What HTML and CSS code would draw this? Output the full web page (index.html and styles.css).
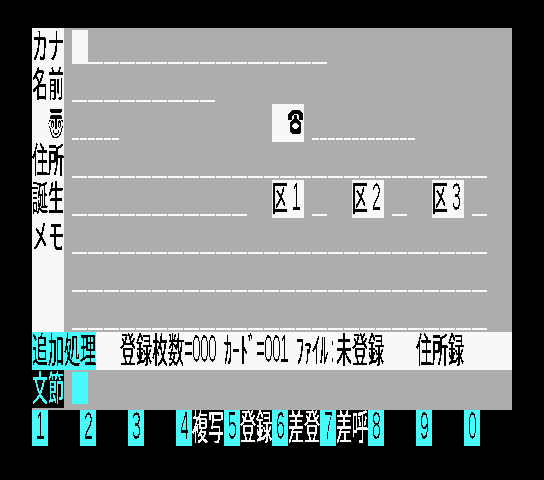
FILE: index.html
```html
<!DOCTYPE html>
<html lang="ja">
<head>
<meta charset="utf-8">
<title>住所録</title>
<link rel="stylesheet" href="styles.css">
</head>
<body>
<svg class="defs" width="0" height="0" aria-hidden="true">
  <filter id="crisp" x="-20%" y="-20%" width="140%" height="140%" color-interpolation-filters="sRGB">
    <feComponentTransfer><feFuncA type="discrete" tableValues="0 1 1"/></feComponentTransfer>
  </filter>
  <filter id="crisp-thin" x="-20%" y="-20%" width="140%" height="140%" color-interpolation-filters="sRGB">
    <feComponentTransfer><feFuncA type="discrete" tableValues="0 0 1"/></feComponentTransfer>
  </filter>
</svg>
<main class="screen">
  <section class="form">
    <div class="labels">
      <div class="row txt"><span class="k">カナ</span></div>
      <div class="row txt"><span class="k">名前</span></div>
      <div class="row txt end"><span class="k mark">〠</span></div>
      <div class="row txt"><span class="k">住所</span></div>
      <div class="row txt"><span class="k">誕生</span></div>
      <div class="row txt"><span class="k">メモ</span></div>
      <div class="row"></div>
      <div class="row"></div>
    </div>
    <div class="fields">
      <div class="row"><span class="cursor white"></span><span class="ul u16 w240"></span></div>
      <div class="row"><span class="ul u16 w144"></span></div>
      <div class="row">
        <span class="ul u8 w48"></span>
        <span class="box far-tel">
          <svg class="phone" width="16" height="24" viewBox="0 0 16 24" shape-rendering="crispEdges">
            <path d="M0 10V4L4 0H11L15 4V10H11V6L9 4H6L4 6V10Z" fill="#000"/>
            <path d="M6 5H9V9H10L13 13V22L11 24H4L2 22V13L5 9H6Z" fill="#000"/>
            <path d="M6 13H9V14H10V15H11V17H10V18H9V19H6V18H5V17H4V15H5V14H6Z" fill="#f8f8f8"/>
          </svg>
        </span>
        <span class="ul u8 w104 gap8"></span>
      </div>
      <div class="row"><span class="ul u16 w416"></span></div>
      <div class="row">
        <span class="ul u16 w176"></span>
        <span class="box far-ku txt"><span class="k">区</span><span class="d wide">1</span></span>
        <span class="ul u16 w16 gap8"></span>
        <span class="box txt next"><span class="k">区</span><span class="d wide">2</span></span>
        <span class="ul u16 w16 gap8"></span>
        <span class="box txt next"><span class="k">区</span><span class="d wide">3</span></span>
        <span class="ul u16 w16 gap8"></span>
      </div>
      <div class="row"><span class="ul u16 w416"></span></div>
      <div class="row"><span class="ul u16 w416"></span></div>
      <div class="row"><span class="ul u16 w416"></span></div>
    </div>
  </section>

  <section class="status">
    <div class="mode txt"><span class="k">追加処理</span></div>
    <div class="info txt">
      <span class="k">登録枚数</span><span class="d one">=</span><span class="d">000</span><span class="sp"></span><span class="k">ｶｰﾄﾞ</span><span class="d one">=</span><span class="d">001</span><span class="sp"></span><span class="k">ﾌｧｲﾙ</span><span class="d one">:</span><span class="k">未登録</span><span class="sp4"></span><span class="k">住所録</span>
    </div>
  </section>

  <section class="input">
    <div class="phrase txt"><span class="k">文節</span></div>
    <div class="entry"><span class="cursor cyan"></span></div>
  </section>

  <section class="keys">
    <div class="key"><span class="num txt"><span class="d">1</span></span></div>
    <div class="key"><span class="num txt"><span class="d">2</span></span></div>
    <div class="key"><span class="num txt"><span class="d">3</span></span></div>
    <div class="key"><span class="num txt"><span class="d">4</span></span><span class="lbl txt"><span class="k">複写</span></span></div>
    <div class="key"><span class="num txt"><span class="d">5</span></span><span class="lbl txt"><span class="k">登録</span></span></div>
    <div class="key"><span class="num txt"><span class="d">6</span></span><span class="lbl txt"><span class="k">差登</span></span></div>
    <div class="key"><span class="num txt"><span class="d">7</span></span><span class="lbl txt"><span class="k">差呼</span></span></div>
    <div class="key"><span class="num txt"><span class="d">8</span></span></div>
    <div class="key"><span class="num txt"><span class="d">9</span></span></div>
    <div class="key"><span class="num txt"><span class="d">0</span></span></div>
  </section>
</main>
</body>
</html>
```
FILE: styles.css
```css
html, body { margin: 0; background: #000; }
body { width: 544px; height: 480px; overflow: hidden; }
.defs { position: absolute; }

.screen { width: 480px; margin-left: 32px; padding-top: 28px; color: #000; }

/* text: 8x16 cells stretched vertically, like a low-res text screen */
.txt { display: flex; align-items: center; }
.k, .d { display: block; white-space: pre; flex: none; }
.k { font: 16px/16px "Noto Sans CJK JP", sans-serif; transform: translateY(-3px) scaleY(2.2); filter: url(#crisp); }
.d { font: 16px/16px "Liberation Sans", sans-serif; letter-spacing: -0.9px; transform: translateY(-1px) scaleY(2.4); filter: url(#crisp-thin); }
.d.wide { width: 16px; text-align: center; }
.d.one { width: 8px; text-align: center; }
.k.mark { transform: translateY(-3px) scaleY(2.5); }

/* form */
.form { display: flex; height: 304px; }
.labels { width: 32px; background: #f8f8f8; }
.fields { flex: 1; padding-left: 8px; background: #adadad; }
.row { height: 38px; display: flex; align-items: flex-end; }
.labels .row { align-items: center; }
.labels .end { justify-content: flex-end; }

.ul { height: 2px; margin-bottom: 2px; flex: none; background-repeat: repeat-x; }
.u16 { background-image: linear-gradient(90deg, #f8f8f8 15px, transparent 15px); background-size: 16px 2px; }
.u8 { background-image: linear-gradient(90deg, #f8f8f8 7px, transparent 7px); background-size: 8px 2px; }
.w16 { width: 16px; }
.w48 { width: 48px; }
.w104 { width: 104px; }
.w144 { width: 144px; }
.w176 { width: 176px; }
.w240 { width: 240px; }
.w416 { width: 416px; }
.gap8 { margin-left: 8px; }

.cursor { display: block; width: 16px; flex: none; }
.white { height: 34px; background: #f8f8f8; margin-bottom: 2px; }
.cyan { height: 32px; background: #48fbfb; }

.box { width: 32px; height: 38px; flex: none; background: #f8f8f8; }
.box.far-tel { margin-left: 152px; display: flex; align-items: center; justify-content: flex-end; }
.box.far-ku { margin-left: 24px; }
.box.next { margin-left: 24px; }
.phone { display: block; margin-bottom: 2px; }

/* status line */
.status { display: flex; height: 38px; background: #f8f8f8; }
.mode { width: 64px; background: #48fbfb; flex: none; }
.info { padding-left: 24px; }
.sp { display: block; width: 8px; flex: none; }
.sp4 { display: block; width: 32px; flex: none; }

/* input line */
.input { display: flex; height: 40px; background: #adadad; }
.phrase { width: 32px; height: 38px; background: #000; color: #48fbfb; flex: none; }
.entry { padding: 2px 0 0 8px; }

/* function keys */
.keys { display: grid; grid-template-columns: repeat(10, 48px); height: 36px; }
.key { display: flex; }
.num { width: 16px; background: #48fbfb; justify-content: center; }
.lbl { width: 32px; color: #f8f8f8; }
```
